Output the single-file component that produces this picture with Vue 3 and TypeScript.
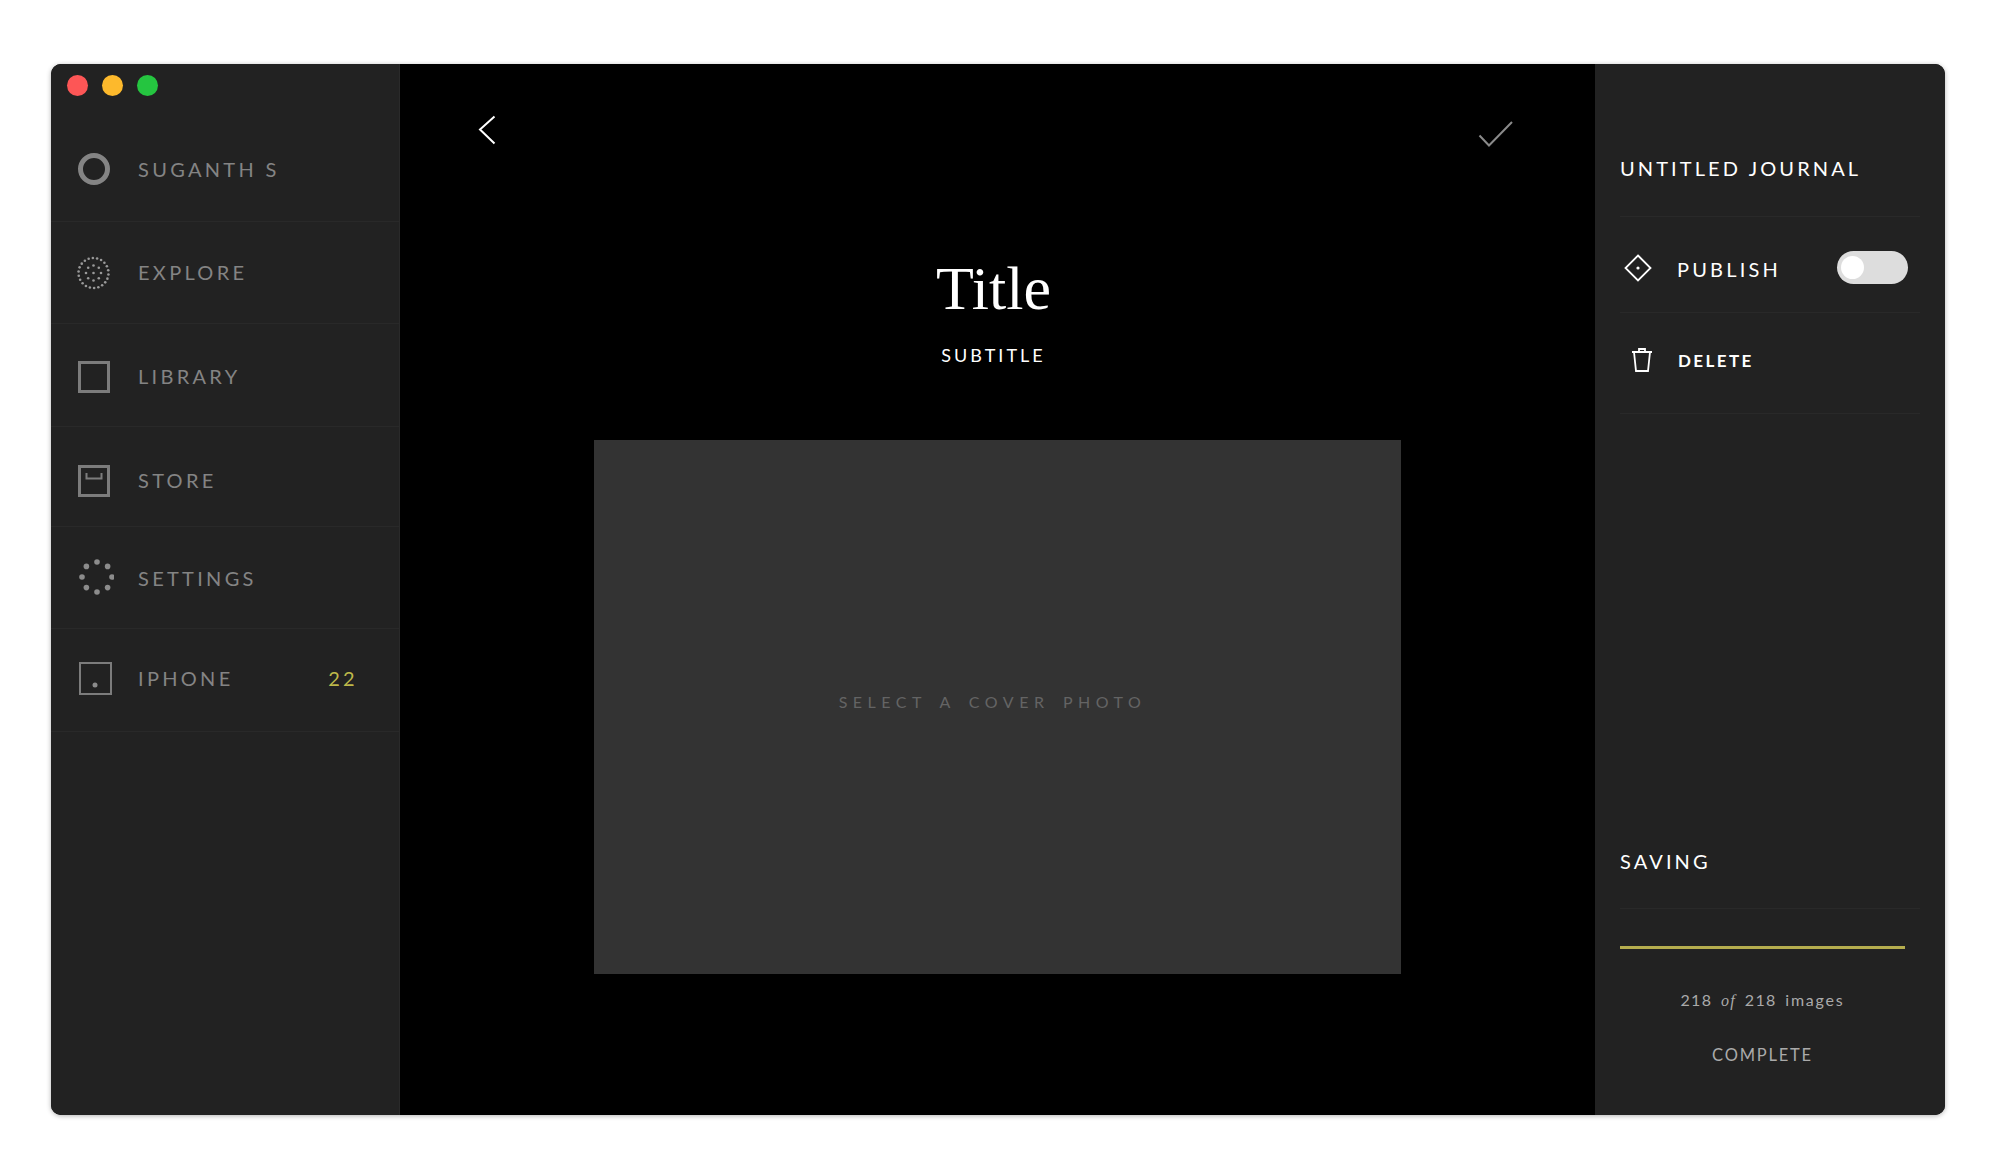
<script setup lang="ts">
interface NavItem {
  id: string;
  label: string;
  count?: string;
}

interface Dot {
  x: number;
  y: number;
}

const navItems: NavItem[] = [
  { id: "user", label: "SUGANTH S" },
  { id: "explore", label: "EXPLORE" },
  { id: "library", label: "LIBRARY" },
  { id: "store", label: "STORE" },
  { id: "settings", label: "SETTINGS" },
  { id: "iphone", label: "IPHONE", count: "22" },
];

function ring(cx: number, cy: number, r: number, count: number, start = 0): Dot[] {
  return Array.from({ length: count }, (_, i) => {
    const a = start + (i / count) * Math.PI * 2;
    return { x: cx + Math.cos(a) * r, y: cy + Math.sin(a) * r };
  });
}

// 探索アイコンの点
const exploreDots: Dot[] = [
  ...ring(19.5, 20, 15, 22, 0.1),
  ...ring(19.5, 20, 7.5, 8),
  { x: 19.5, y: 20 },
];
const settingsDots: Dot[] = ring(23, 18, 15, 8);
</script>

<template>
  <div class="page">
    <div class="window">
      <aside class="sidebar">
        <div class="lights">
          <span class="light red" />
          <span class="light yellow" />
          <span class="light green" />
        </div>
        <div
          v-for="item in navItems"
          :key="item.id"
          class="nav-row"
          :class="`nav-${item.id}`"
        >
          <svg class="nav-icon" width="40" height="40" viewBox="0 0 40 40" fill="none" stroke="#7c7c7c">
            <circle v-if="item.id === 'user'" cx="20" cy="20" r="13.5" stroke-width="5" stroke="#848484" />
            <template v-else-if="item.id === 'explore'">
              <circle v-for="(d, i) in exploreDots" :key="i" :cx="d.x" :cy="d.y" r="1.3" fill="#999" stroke="none" />
            </template>
            <rect v-else-if="item.id === 'library'" x="5.5" y="5.5" width="29" height="29" stroke-width="3" />
            <template v-else-if="item.id === 'store'">
              <rect x="5.5" y="5.5" width="29" height="29" stroke-width="3" />
              <path d="M12.5 12v5.5h15V12" stroke-width="2" />
            </template>
            <template v-else-if="item.id === 'settings'">
              <circle v-for="(d, i) in settingsDots" :key="i" :cx="d.x" :cy="d.y" r="2.8" fill="#8c8c8c" stroke="none" />
            </template>
            <template v-else>
              <rect x="6" y="4" width="31" height="31" stroke-width="2" />
              <circle cx="21" cy="26" r="2.5" fill="#8c8c8c" stroke="none" />
            </template>
          </svg>
          <span class="nav-label">{{ item.label }}</span>
          <span v-if="item.count" class="nav-count">{{ item.count }}</span>
        </div>
      </aside>

      <main class="center">
        <div class="toolbar">
          <svg width="18" height="30" viewBox="0 0 18 30" fill="none" stroke="#fff" stroke-width="2">
            <path d="M16.5 1.5 2 14.5l14.5 14" />
          </svg>
          <svg class="check" width="36" height="28" viewBox="0 0 36 28" fill="none" stroke="#8a8a8a" stroke-width="2">
            <path d="M1.5 15.5 11 25.5 34 2" />
          </svg>
        </div>
        <h1 class="title">Title</h1>
        <div class="subtitle">SUBTITLE</div>
        <div class="cover">
          <span class="cover-text">SELECT A COVER PHOTO</span>
        </div>
      </main>

      <aside class="details">
        <div class="details-head">UNTITLED JOURNAL</div>
        <div class="detail-row publish">
          <svg class="diamond" width="30" height="30" viewBox="0 0 30 30" fill="none" stroke="#fff" stroke-width="1.8">
            <path d="M15 2.5 27.5 15 15 27.5 2.5 15Z" />
            <circle cx="15" cy="15" r="1.6" fill="#fff" stroke="none" />
          </svg>
          <span class="publish-label">PUBLISH</span>
          <span class="toggle"><span class="knob" /></span>
        </div>
        <div class="detail-row delete">
          <svg width="24" height="26" viewBox="0 0 24 26" fill="none" stroke="#fff" stroke-width="1.8">
            <path d="M2 5h20M4 5l2 19h12l2-19M9 5V2h6v3" />
          </svg>
          <span class="delete-label">DELETE</span>
        </div>

        <div class="saving">
          <div class="saving-head">SAVING</div>
          <div class="progress"><div class="progress-bar" /></div>
          <div class="images">218 <i>of</i> 218 <span class="images-word">images</span></div>
          <div class="complete">COMPLETE</div>
        </div>
      </aside>
    </div>
  </div>
</template>

<style>
html,
body {
  background: #fff;
}
</style>

<style scoped>
.page {
  box-sizing: border-box;
  width: 2000px;
  height: 1175px;
  padding: 64px 55px 60px 51px;
  font-family: Lato, "Liberation Sans", sans-serif;
}

.window {
  display: flex;
  height: 100%;
  border-radius: 10px;
  overflow: hidden;
  background: #000;
  box-shadow: 0 1px 5px rgba(0, 0, 0, 0.3);
}

.sidebar {
  flex: 0 0 349px;
  display: grid;
  grid-template-rows: 53px 105px 102px 103px 100px 102px 103px 1fr;
  background: #222;
  border-right: 1px solid #2a2a2a;
  box-sizing: border-box;
}

.lights {
  display: flex;
  gap: 14px;
  padding: 11px 0 0 16px;
}

.light {
  width: 21px;
  height: 21px;
  border-radius: 50%;
}

.red {
  background: #fd5656;
}

.yellow {
  background: #fdb92c;
}

.green {
  background: #25c540;
}

.nav-row {
  display: flex;
  align-items: center;
  box-sizing: border-box;
  padding-left: 23px;
  border-bottom: 1px solid #292929;
  color: #848484;
}

.nav-library {
  padding-top: 3px;
}

.nav-store {
  padding-top: 8px;
}

.nav-settings {
  padding-top: 2px;
}

.nav-iphone {
  padding-bottom: 3px;
}

.nav-icon {
  flex: none;
}

.nav-label {
  margin: 0 0 1px 24px;
  font-size: 20px;
  letter-spacing: 3.3px;
}

.nav-count {
  margin: 0 41px 1px auto;
  color: #bdb84a;
  font-size: 20px;
  letter-spacing: 3.3px;
}

.center {
  flex: 1;
  min-width: 0;
  display: flex;
  flex-direction: column;
  align-items: center;
  background: #000;
}

.toolbar {
  align-self: stretch;
  display: flex;
  justify-content: space-between;
  align-items: flex-start;
  padding: 51px 81px 0 78px;
  height: 82px;
  box-sizing: border-box;
}

.check {
  margin-top: 5px;
}

.title {
  margin: 107px 8px 0 0;
  color: #fff;
  font-family: "Liberation Serif", serif;
  font-size: 62px;
  font-weight: 400;
  line-height: 70px;
}

.subtitle {
  margin: 21px 8px 0 0;
  color: #fff;
  font-size: 18px;
  letter-spacing: 3px;
  line-height: 22px;
}

.cover {
  margin-top: 74px;
  width: 807px;
  height: 534px;
  display: flex;
  align-items: center;
  justify-content: center;
  background: #333;
}

.cover-text {
  margin: 0 10px 11px 0;
  color: #646464;
  font-size: 16px;
  letter-spacing: 5.5px;
  word-spacing: 4px;
}

.details {
  flex: 0 0 350px;
  display: flex;
  flex-direction: column;
  box-sizing: border-box;
  padding: 0 25px;
  background: #222;
  color: #fff;
}

.details-head {
  height: 153px;
  box-sizing: border-box;
  padding-top: 93px;
  line-height: 22px;
  font-size: 20px;
  letter-spacing: 3.1px;
  border-bottom: 1px solid #292929;
}

.detail-row {
  display: flex;
  align-items: center;
  box-sizing: border-box;
  border-bottom: 1px solid #292929;
}

.publish {
  height: 96px;
  padding: 5px 0 0 3px;
}

.diamond {
  margin-top: 2px;
}

.delete {
  height: 101px;
  padding: 0 0 6px 10px;
}

.publish-label {
  margin: 3px 0 0 24px;
  font-size: 20px;
  letter-spacing: 3.2px;
}

.delete-label {
  margin-left: 24px;
  font-size: 17px;
  font-weight: 700;
  letter-spacing: 2.4px;
}

.toggle {
  margin-left: auto;
  margin-right: 12px;
  width: 71px;
  height: 33px;
  display: flex;
  align-items: center;
  padding-left: 4px;
  box-sizing: border-box;
  border-radius: 17px;
  background: #ddd;
}

.knob {
  width: 23px;
  height: 23px;
  border-radius: 50%;
  background: #fff;
}

.saving {
  margin-top: auto;
}

.saving-head {
  height: 64px;
  box-sizing: border-box;
  padding-top: 5px;
  line-height: 22px;
  font-size: 20px;
  letter-spacing: 3.1px;
  border-bottom: 1px solid #292929;
}

.progress {
  margin: 37px 15px 0 0;
  height: 3px;
}

.progress-bar {
  width: 100%;
  height: 100%;
  background: #b5ad4e;
}

.images {
  margin-top: 41px;
  padding-right: 15px;
  text-align: center;
  color: #aaa;
  font-size: 16px;
  letter-spacing: 1.4px;
  line-height: 20px;
  word-spacing: 3px;
}

.images i {
  font-family: "Liberation Serif", serif;
}

.images-word {
  letter-spacing: 1.8px;
}

.complete {
  margin: 34px 0 50px;
  padding-right: 15px;
  text-align: center;
  color: #aaa;
  font-size: 16.5px;
  letter-spacing: 1.8px;
  line-height: 20px;
}
</style>
